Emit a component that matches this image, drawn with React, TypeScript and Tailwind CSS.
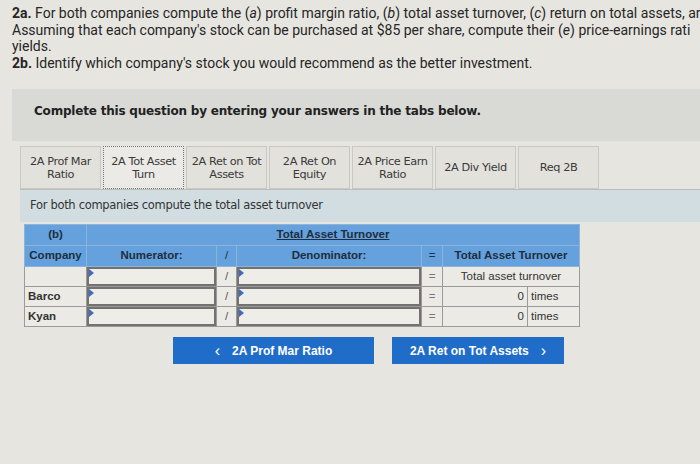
import React from "react";

const tabs = [
  ["2A Prof Mar", "Ratio"],
  ["2A Tot Asset", "Turn"],
  ["2A Ret on Tot", "Assets"],
  ["2A Ret On", "Equity"],
  ["2A Price Earn", "Ratio"],
  ["2A Div Yield"],
  ["Req 2B"],
];

function InputCell() {
  return (
    <td className="p-0 border border-[#9a9a9a]">
      <div className="relative h-[19px] border-2 border-[#727272] bg-[#eeede8]">
        <span className="absolute left-0 top-0 w-0 h-0 border-t-[4px] border-b-[4px] border-l-[5px] border-t-transparent border-b-transparent border-l-[#3d6cc0]" />
      </div>
    </td>
  );
}

export default function App() {
  return (
    <div
      className="w-[700px] h-[464px] overflow-hidden bg-[#e7e5e0] text-[#2a2a2a]"
      style={{ fontFamily: '"Liberation Sans", Arial, sans-serif' }}
    >
      <div className="pl-[12px] pt-[5px] text-[14px] leading-[16.5px] whitespace-nowrap overflow-hidden text-[#262626]" style={{ fontFamily: 'Roboto, "Liberation Sans", sans-serif' }}>
        <div>
          <b>2a.</b> For both companies compute the (<i>a</i>) profit margin ratio, (<i>b</i>) total asset turnover, (<i>c</i>) return on total assets, ar
        </div>
        <div>Assuming that each company's stock can be purchased at $85 per share, compute their (<i>e</i>) price-earnings rati</div>
        <div>yields.</div>
        <div>
          <b>2b.</b> Identify which company's stock you would recommend as the better investment.
        </div>
      </div>

      <div className="ml-[12px] mt-[18px] h-[52px] bg-[#d9d9d6] pl-[22px] pt-[13px]">
        <div className="font-bold text-[#222]" style={{ fontFamily: '"DejaVu Sans", Verdana, sans-serif', fontSize: "12px", letterSpacing: "-0.2px" }}>
          Complete this question by entering your answers in the tabs below.
        </div>
      </div>

      <div className="ml-[20px] mt-[5px] flex" style={{ fontFamily: '"DejaVu Sans", Verdana, sans-serif' }}>
        {tabs.map((t, i) => (
          <div
            key={i}
            className={
              "w-[81px] mr-[2px] h-[43px] flex flex-col items-center justify-center text-[11.3px] leading-[13px] text-[#3a3a3a] " +
              (i === 1
                ? "border border-dotted border-[#777] bg-[#ebeae6]"
                : "border border-[#c9c8c3] bg-[#e2e1dc]")
            }
            style={{ letterSpacing: "-0.4px" }}
          >
            {t.map((l, j) => (
              <div key={j}>{l}</div>
            ))}
          </div>
        ))}
      </div>

      <div className="ml-[20px] h-[33px] border-t border-[#bdbdb8] bg-[#d2dde2] pl-[10px] flex items-center text-[11.5px] text-[#333]" style={{ fontFamily: '"DejaVu Sans", Verdana, sans-serif', letterSpacing: "-0.3px" }}>
        For both companies compute the total asset turnover
      </div>

      <table className="ml-[24px] mt-[2px] border-collapse text-[11.5px]">
        <colgroup>
          <col className="w-[62px]" />
          <col className="w-[130px]" />
          <col className="w-[20px]" />
          <col className="w-[185px]" />
          <col className="w-[21px]" />
          <col className="w-[85px]" />
          <col className="w-[52px]" />
        </colgroup>
        <tbody>
          <tr className="h-[21px] bg-[#64a1dd] font-bold text-[#1f2d3d]">
            <td className="border border-[#8fb3d8] text-center">(b)</td>
            <td colSpan={6} className="border border-[#8fb3d8] text-center">
              <span className="underline">Total Asset Turnover</span>
            </td>
          </tr>
          <tr className="h-[21px] bg-[#64a1dd] font-bold text-[#1f2d3d]">
            <td className="border border-[#8fb3d8] text-center">Company</td>
            <td className="border border-[#8fb3d8] text-center">Numerator:</td>
            <td className="border border-[#8fb3d8] text-center font-normal">/</td>
            <td className="border border-[#8fb3d8] text-center">Denominator:</td>
            <td className="border border-[#8fb3d8] text-center font-normal">=</td>
            <td colSpan={2} className="border border-[#8fb3d8] text-center">Total Asset Turnover</td>
          </tr>
          <tr className="h-[20px] bg-[#ebeae5]">
            <td className="border border-[#9a9a9a]"></td>
            <InputCell />
            <td className="border border-[#9a9a9a] text-center text-[#555]">/</td>
            <InputCell />
            <td className="border border-[#9a9a9a] text-center text-[#777]">=</td>
            <td colSpan={2} className="border border-[#9a9a9a] text-center text-[#333]">Total asset turnover</td>
          </tr>
          {["Barco", "Kyan"].map((n) => (
            <tr key={n} className="h-[20px] bg-[#ebeae5]">
              <td className="border border-[#9a9a9a] pl-[3px] font-bold text-[#333]">{n}</td>
              <InputCell />
              <td className="border border-[#9a9a9a] text-center text-[#555]">/</td>
              <InputCell />
              <td className="border border-[#9a9a9a] text-center text-[#777]">=</td>
              <td className="border border-[#9a9a9a] text-right pr-[3px] text-[#333]">0</td>
              <td className="border border-[#9a9a9a] pl-[3px] text-[#333]">times</td>
            </tr>
          ))}
        </tbody>
      </table>

      <div className="mt-[10px] flex">
        <div className="ml-[173px] w-[201px] h-[27px] bg-[#1f6dc9] text-white font-bold text-[12px] flex items-center justify-center">
          <span className="mr-[12px] text-[16px] leading-none font-normal">&lsaquo;</span>2A Prof Mar Ratio
        </div>
        <div className="ml-[18px] w-[172px] h-[27px] bg-[#1f6dc9] text-white font-bold text-[12px] flex items-center justify-center">
          2A Ret on Tot Assets<span className="ml-[12px] text-[16px] leading-none font-normal">&rsaquo;</span>
        </div>
      </div>
    </div>
  );
}
